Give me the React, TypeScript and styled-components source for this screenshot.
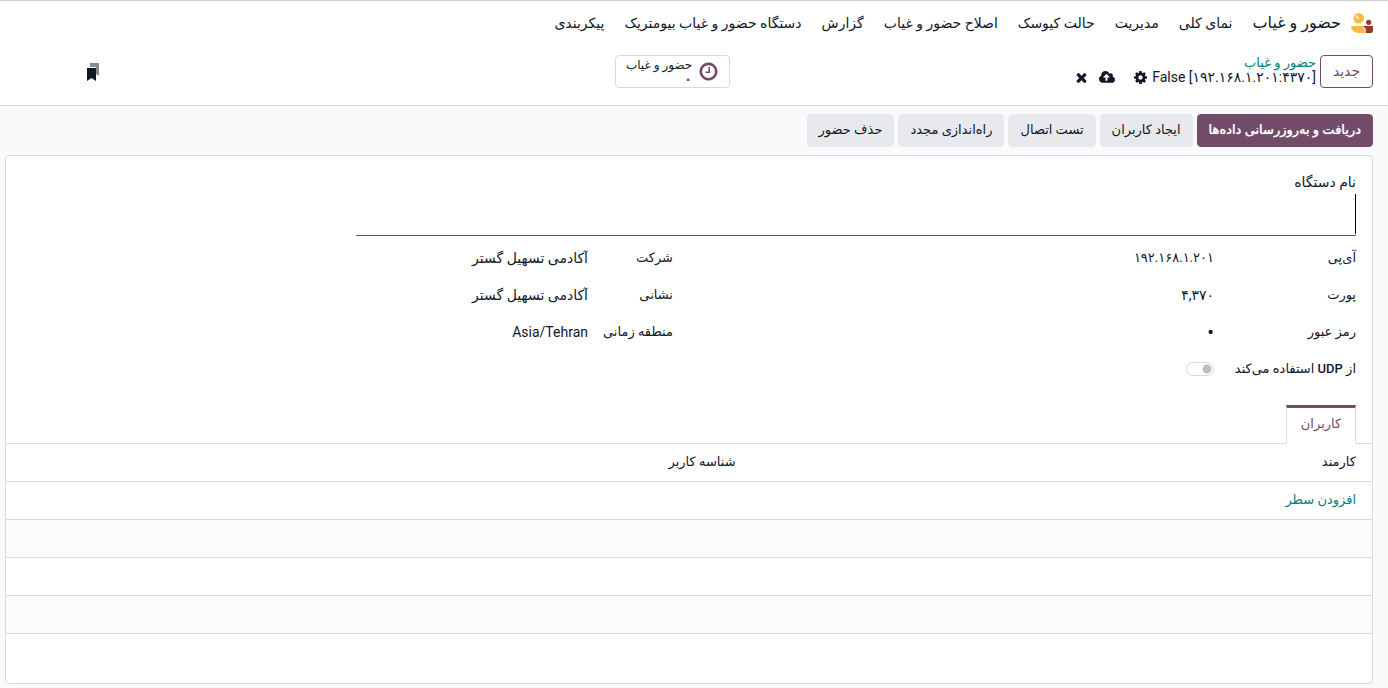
import React from "react";
import styled, { createGlobalStyle } from "styled-components";

const PLUM = "#714B67";
const TEAL = "#017e84";
const INK = "#111827";
const LINE = "#d8dadd";

const GlobalStyle = createGlobalStyle`
  *, *::before, *::after { box-sizing: border-box; }
  body {
    margin: 0;
    background: #f9fafb;
    color: ${INK};
    font-family: Roboto, "DejaVu Sans", sans-serif;
    font-size: 13px;
    line-height: 20px;
  }
  button, input { font: inherit; color: inherit; }
  a { color: inherit; text-decoration: none; }
`;

const Page = styled.div`
  display: flex;
  flex-direction: column;
  min-height: 100vh;
`;

const Header = styled.header`
  background: #fff;
  border-top: 1px solid #ccc;
  border-bottom: 1px solid ${LINE};
  padding-inline: 15px;
`;

const NavBar = styled.nav`
  display: flex;
  align-items: center;
  gap: 20px;
  height: 44px;
  font-size: 14px;
`;

const Brand = styled.a`
  display: flex;
  align-items: center;
  gap: 10px;
  font-size: 16px;
  white-space: nowrap;
`;

const NavLink = styled.a`
  white-space: nowrap;
`;

const ControlPanel = styled.div`
  display: grid;
  grid-template-columns: 15fr auto 14fr;
  align-items: start;
  padding-top: 10px;
  height: 60px;
`;

const Crumbs = styled.div`
  display: flex;
  gap: 4px;
`;

const Button = styled.button<{ $kind?: "primary" | "outline" }>`
  height: 33px;
  min-width: 53px;
  padding: 0 11px 2px;
  border: 1px solid ${(p) => (p.$kind ? PLUM : "#e7e9ed")};
  border-radius: 4px;
  background: ${(p) => (p.$kind === "primary" ? PLUM : p.$kind === "outline" ? "#fff" : "#e7e9ed")};
  color: ${(p) => (p.$kind === "primary" ? "#fff" : p.$kind === "outline" ? PLUM : INK)};
  font-size: ${(p) => (p.$kind === "outline" ? 14 : 13)}px;
  text-shadow: ${(p) => (p.$kind === "primary" ? "0 0 1px #fff" : "none")};
  white-space: nowrap;
`;

const Trail = styled.div`
  display: flex;
  flex-direction: column;
  line-height: 15px;
`;

const TrailLink = styled.a`
  color: ${TEAL};
`;

const RecordLine = styled.div`
  display: flex;
  align-items: center;
  gap: 4px;
`;

const RecordName = styled.span`
  font-size: 14px;
  white-space: nowrap;
`;

const IconButton = styled.button`
  display: flex;
  padding: 0;
  border: 0;
  background: none;
`;

const SaveTools = styled.div`
  display: flex;
  align-items: center;
  gap: 10px;
  margin-inline-start: 14px;
`;

const StatButton = styled.button`
  display: flex;
  align-items: center;
  gap: 6px;
  height: 33px;
  min-width: 114px;
  padding: 0 10px;
  border: 1px solid ${LINE};
  border-radius: 4px;
  background: #fff;
  font-size: 12px;
  line-height: 14px;
  text-align: start;
`;

const StatText = styled.span`
  display: flex;
  flex-direction: column;
  white-space: nowrap;
`;

const StatValue = styled.span`
  color: ${PLUM};
  font-size: 14px;
  font-weight: 700;
`;

const BookmarkSlot = styled.div`
  display: flex;
  justify-content: flex-end;
  padding-top: 8px;
  padding-inline-end: 71px;
`;

const Actions = styled.div`
  display: flex;
  gap: 4px;
  padding: 8px 15px;
`;

const Sheet = styled.main`
  flex: 1;
  display: flex;
  flex-direction: column;
  margin: 0 15px 4px 5px;
  border: 1px solid ${LINE};
  border-radius: 4px;
  background: #fff;
`;

const FormBody = styled.div`
  padding: 16px 16px 0;
`;

const TitleBlock = styled.div`
  display: flex;
  flex-direction: column;
  width: 75%;
`;

const FieldLabel = styled.label<{ $large?: boolean }>`
  font-size: ${(p) => (p.$large ? 14 : 13)}px;
  font-weight: 500;
  white-space: nowrap;
`;

const TitleInput = styled.input`
  height: 42px;
  margin-top: 2px;
  padding: 0;
  border: 0;
  border-bottom: 1px solid ${TEAL};
  outline: 0;
  background: linear-gradient(#000, #000) right top / 1px 40px no-repeat;
  font-size: 28px;
`;

const Groups = styled.div`
  display: grid;
  grid-template-columns: 1fr 1fr;
  gap: 32px;
  align-items: start;
  padding-top: 12px;
`;

const Group = styled.div<{ $label: number }>`
  display: grid;
  grid-template-columns: ${(p) => p.$label}px 1fr;
  column-gap: 16px;
  row-gap: 17px;
  align-items: center;
`;

const FieldInput = styled.input<{ $size?: number }>`
  width: 100%;
  height: 20px;
  padding: 0;
  border: 0;
  outline: 0;
  background: none;
  font-size: ${(p) => p.$size ?? 13}px;
  text-align: right;
`;

const Switch = styled.input`
  appearance: none;
  width: 28px;
  height: 14px;
  margin: 0;
  border: 1px solid ${LINE};
  border-radius: 7px;
  background: radial-gradient(circle at 20px 6px, #bfbfbf 4px, transparent 5px);
`;

const Tabs = styled.div`
  display: flex;
  margin-top: 26px;
  padding-inline: 16px;
  border-bottom: 1px solid ${LINE};
`;

const Tab = styled.button`
  width: 70px;
  height: 39px;
  margin-bottom: -1px;
  padding: 0 0 3px;
  border: 1px solid ${LINE};
  border-top: 3px solid ${PLUM};
  border-bottom-color: #fff;
  background: #fff;
  color: ${PLUM};
`;

const Table = styled.table`
  width: 100%;
  border-collapse: collapse;
  table-layout: fixed;

  th, td {
    height: 38px;
    padding: 0 8px;
    border-bottom: 1px solid ${LINE};
    text-align: start;
    font-weight: 500;
  }
  th { height: 37px; }
  th:first-child, td:first-child { padding-inline-start: 16px; }
  th:first-child { width: 46%; }
  tbody tr:nth-child(even) { background: #fcfcfc; }
`;

const AddLine = styled.a`
  color: ${TEAL};
  font-weight: 400;
`;

const faPaths = {
  close:
    "M1490 1322q0 40-28 68l-136 136q-28 28-68 28t-68-28l-294-294-294 294q-28 28-68 28t-68-28l-136-136q-28-28-28-68t28-68l294-294-294-294q-28-28-28-68t28-68l136-136q28-28 68-28t68 28l294 294 294-294q28-28 68-28t68 28l136 136q28 28 28 68t-28 68l-294 294 294 294q28 28 28 68z",
  cog: "M1152 896q0-106-75-181t-181-75-181 75-75 181 75 181 181 75 181-75 75-181zm512-109v222q0 12-8 23t-20 13l-185 28q-19 54-39 91 35 50 107 138 10 12 10 25t-9 23q-27 37-99 108t-94 71q-12 0-26-9l-138-108q-44 23-91 38-16 136-29 186-7 28-36 28h-222q-14 0-24.5-8.5t-11.5-21.5l-28-184q-49-16-90-37l-141 107q-10 9-25 9-14 0-25-11-126-114-165-168-7-10-7-23 0-12 8-23 15-21 51-66.5t54-70.5q-27-50-41-99l-183-27q-13-2-21-12.5t-8-23.5v-222q0-12 8-23t19-13l186-28q14-46 39-92-40-57-107-138-10-12-10-24 0-10 9-23 26-36 98.5-107.5t94.5-71.5q13 0 26 10l138 107q44-23 91-38 16-136 29-186 7-28 36-28h222q14 0 24.5 8.5t11.5 21.5l28 184q49 16 90 37l142-107q9-9 24-9 13 0 25 10 129 119 165 170 7 8 7 22 0 12-8 23-15 21-51 66.5t-54 70.5q26 50 41 98l183 28q13 2 21 12.5t8 23.5z",
  clock:
    "M1024 544v448q0 14-9 23t-23 9h-320q-14 0-23-9t-9-23v-64q0-14 9-23t23-9h224v-352q0-14 9-23t23-9h64q14 0 23 9t9 23zm416 352q0-148-73-273t-198-198-273-73-273 73-198 198-73 273 73 273 198 198 273 73 273-73 198-198 73-273zm224 0q0 209-103 385.5t-279.5 279.5-385.5 103-385.5-103-279.5-279.5-103-385.5 103-385.5 279.5-279.5 385.5-103 385.5 103 279.5 279.5 103 385.5z",
  upload:
    "M1216 864q0-14-9-23l-352-352q-9-9-23-9t-23 9l-351 351q-10 12-10 24 0 14 9 23t23 9h224v352q0 13 9.5 22.5t22.5 9.5h192q13 0 22.5-9.5t9.5-22.5v-352h224q13 0 22.5-9.5t9.5-22.5zm640 288q0 159-112.5 271.5t-271.5 112.5h-1088q-185 0-316.5-131.5t-131.5-316.5q0-130 70-240t188-165q-2-30-2-43 0-212 150-362t362-150q156 0 285.5 87t188.5 231q71-62 166-62 106 0 181 75t75 181q0 76-41 138 130 31 213.5 135.5t83.5 238.5z",
};

function Glyph({ name, size, color = INK }: { name: keyof typeof faPaths; size: number; color?: string }) {
  const wide = name === "upload";
  return (
    <svg
      width={wide ? size + 1 : size}
      height={size}
      viewBox={wide ? "-64 0 1920 1792" : "0 0 1792 1792"}
      fill={color}
      aria-hidden="true"
    >
      <path d={faPaths[name]} />
    </svg>
  );
}

function Logo() {
  return (
    <svg width="22" height="20" viewBox="0 0 22 20" aria-hidden="true">
      <circle cx="7.700" cy="5.300" r="5.300" fill="#fbb945" />
      <path d="M4.700 2.700 7.500 5.500" stroke="#fdf1dc" strokeWidth="1.500" strokeLinecap="round" />
      <path d="M0 13h11l5 7H7a7 7 0 0 1-7-7z" fill="#fbb945" />
      <circle cx="17.700" cy="9.300" r="2.600" fill="#953b24" />
      <path d="M10 13h12v5a2 2 0 0 1-2 2h-5v-2a5 5 0 0 0-5-5z" fill="#953b24" />
    </svg>
  );
}

function Bookmarks() {
  return (
    <svg width="13" height="18" viewBox="0 0 13 18" aria-hidden="true">
      <path d="M4 0h9v13l-3-2V4H4z" fill="#888b93" />
      <path d="M1 5h9v13l-4.500-3L1 18z" fill={INK} />
    </svg>
  );
}

const menu = [
  "نمای کلی",
  "مدیریت",
  "حالت کیوسک",
  "اصلاح حضور و غیاب",
  "گزارش",
  "دستگاه حضور و غیاب بیومتریک",
  "پیکربندی",
];

const actions = ["ایجاد کاربران", "تست اتصال", "راه‌اندازی مجدد", "حذف حضور"];

const deviceFields = [
  { id: "ip", label: "آی‌پی", value: "۱۹۲.۱۶۸.۱.۲۰۱", type: "text", size: 13 },
  { id: "port", label: "پورت", value: "۴,۳۷۰", type: "text", size: 14 },
  { id: "password", label: "رمز عبور", value: "0", type: "password", size: 20 },
];

const companyFields = [
  { id: "company", label: "شرکت", value: "آکادمی تسهیل گستر" },
  { id: "address", label: "نشانی", value: "آکادمی تسهیل گستر" },
  { id: "timezone", label: "منطقه زمانی", value: "Asia/Tehran" },
];

export default function App() {
  return (
    <Page dir="rtl" lang="fa">
      <GlobalStyle />
      <Header>
        <NavBar>
          <Brand href="#">
            <Logo />
            حضور و غیاب
          </Brand>
          {menu.map((item) => (
            <NavLink key={item} href="#">
              {item}
            </NavLink>
          ))}
        </NavBar>
        <ControlPanel>
          <Crumbs>
            <Button $kind="outline">جدید</Button>
            <Trail>
              <TrailLink href="#">حضور و غیاب</TrailLink>
              <RecordLine>
                <RecordName dir="ltr">False [۱۹۲.۱۶۸.۱.۲۰۱:۴۳۷۰]</RecordName>
                <IconButton aria-label="تنظیمات">
                  <Glyph name="cog" size={15} />
                </IconButton>
                <SaveTools>
                  <IconButton aria-label="ذخیره">
                    <Glyph name="upload" size={15} />
                  </IconButton>
                  <IconButton aria-label="لغو">
                    <Glyph name="close" size={15} />
                  </IconButton>
                </SaveTools>
              </RecordLine>
            </Trail>
          </Crumbs>
          <StatButton>
            <Glyph name="clock" size={21} color={PLUM} />
            <StatText>
              <span>حضور و غیاب</span>
              <StatValue>۰</StatValue>
            </StatText>
          </StatButton>
          <BookmarkSlot>
            <IconButton aria-label="نشانک‌ها">
              <Bookmarks />
            </IconButton>
          </BookmarkSlot>
        </ControlPanel>
      </Header>

      <Actions>
        <Button $kind="primary">دریافت و به‌روزرسانی داده‌ها</Button>
        {actions.map((a) => (
          <Button key={a}>{a}</Button>
        ))}
      </Actions>

      <Sheet>
        <FormBody>
          <TitleBlock>
            <FieldLabel $large htmlFor="name">
              نام دستگاه
            </FieldLabel>
            <TitleInput id="name" />
          </TitleBlock>
          <Groups>
            <Group $label={126}>
              {deviceFields.map((f) => (
                <React.Fragment key={f.id}>
                  <FieldLabel htmlFor={f.id}>{f.label}</FieldLabel>
                  <FieldInput id={f.id} type={f.type} $size={f.size} defaultValue={f.value} />
                </React.Fragment>
              ))}
              <FieldLabel htmlFor="udp">از UDP استفاده می‌کند</FieldLabel>
              <Switch id="udp" type="checkbox" />
            </Group>
            <Group $label={69}>
              {companyFields.map((f) => (
                <React.Fragment key={f.id}>
                  <FieldLabel htmlFor={f.id}>{f.label}</FieldLabel>
                  <FieldInput id={f.id} $size={14} defaultValue={f.value} />
                </React.Fragment>
              ))}
            </Group>
          </Groups>
        </FormBody>
        <Tabs role="tablist">
          <Tab role="tab" aria-selected="true">
            کاربران
          </Tab>
        </Tabs>
        <Table>
          <thead>
            <tr>
              <th>کارمند</th>
              <th>شناسه کاربر</th>
            </tr>
          </thead>
          <tbody>
            <tr>
              <td colSpan={2}>
                <AddLine href="#">افزودن سطر</AddLine>
              </td>
            </tr>
            <tr>
              <td colSpan={2} />
            </tr>
            <tr>
              <td colSpan={2} />
            </tr>
            <tr>
              <td colSpan={2} />
            </tr>
          </tbody>
        </Table>
      </Sheet>
    </Page>
  );
}
